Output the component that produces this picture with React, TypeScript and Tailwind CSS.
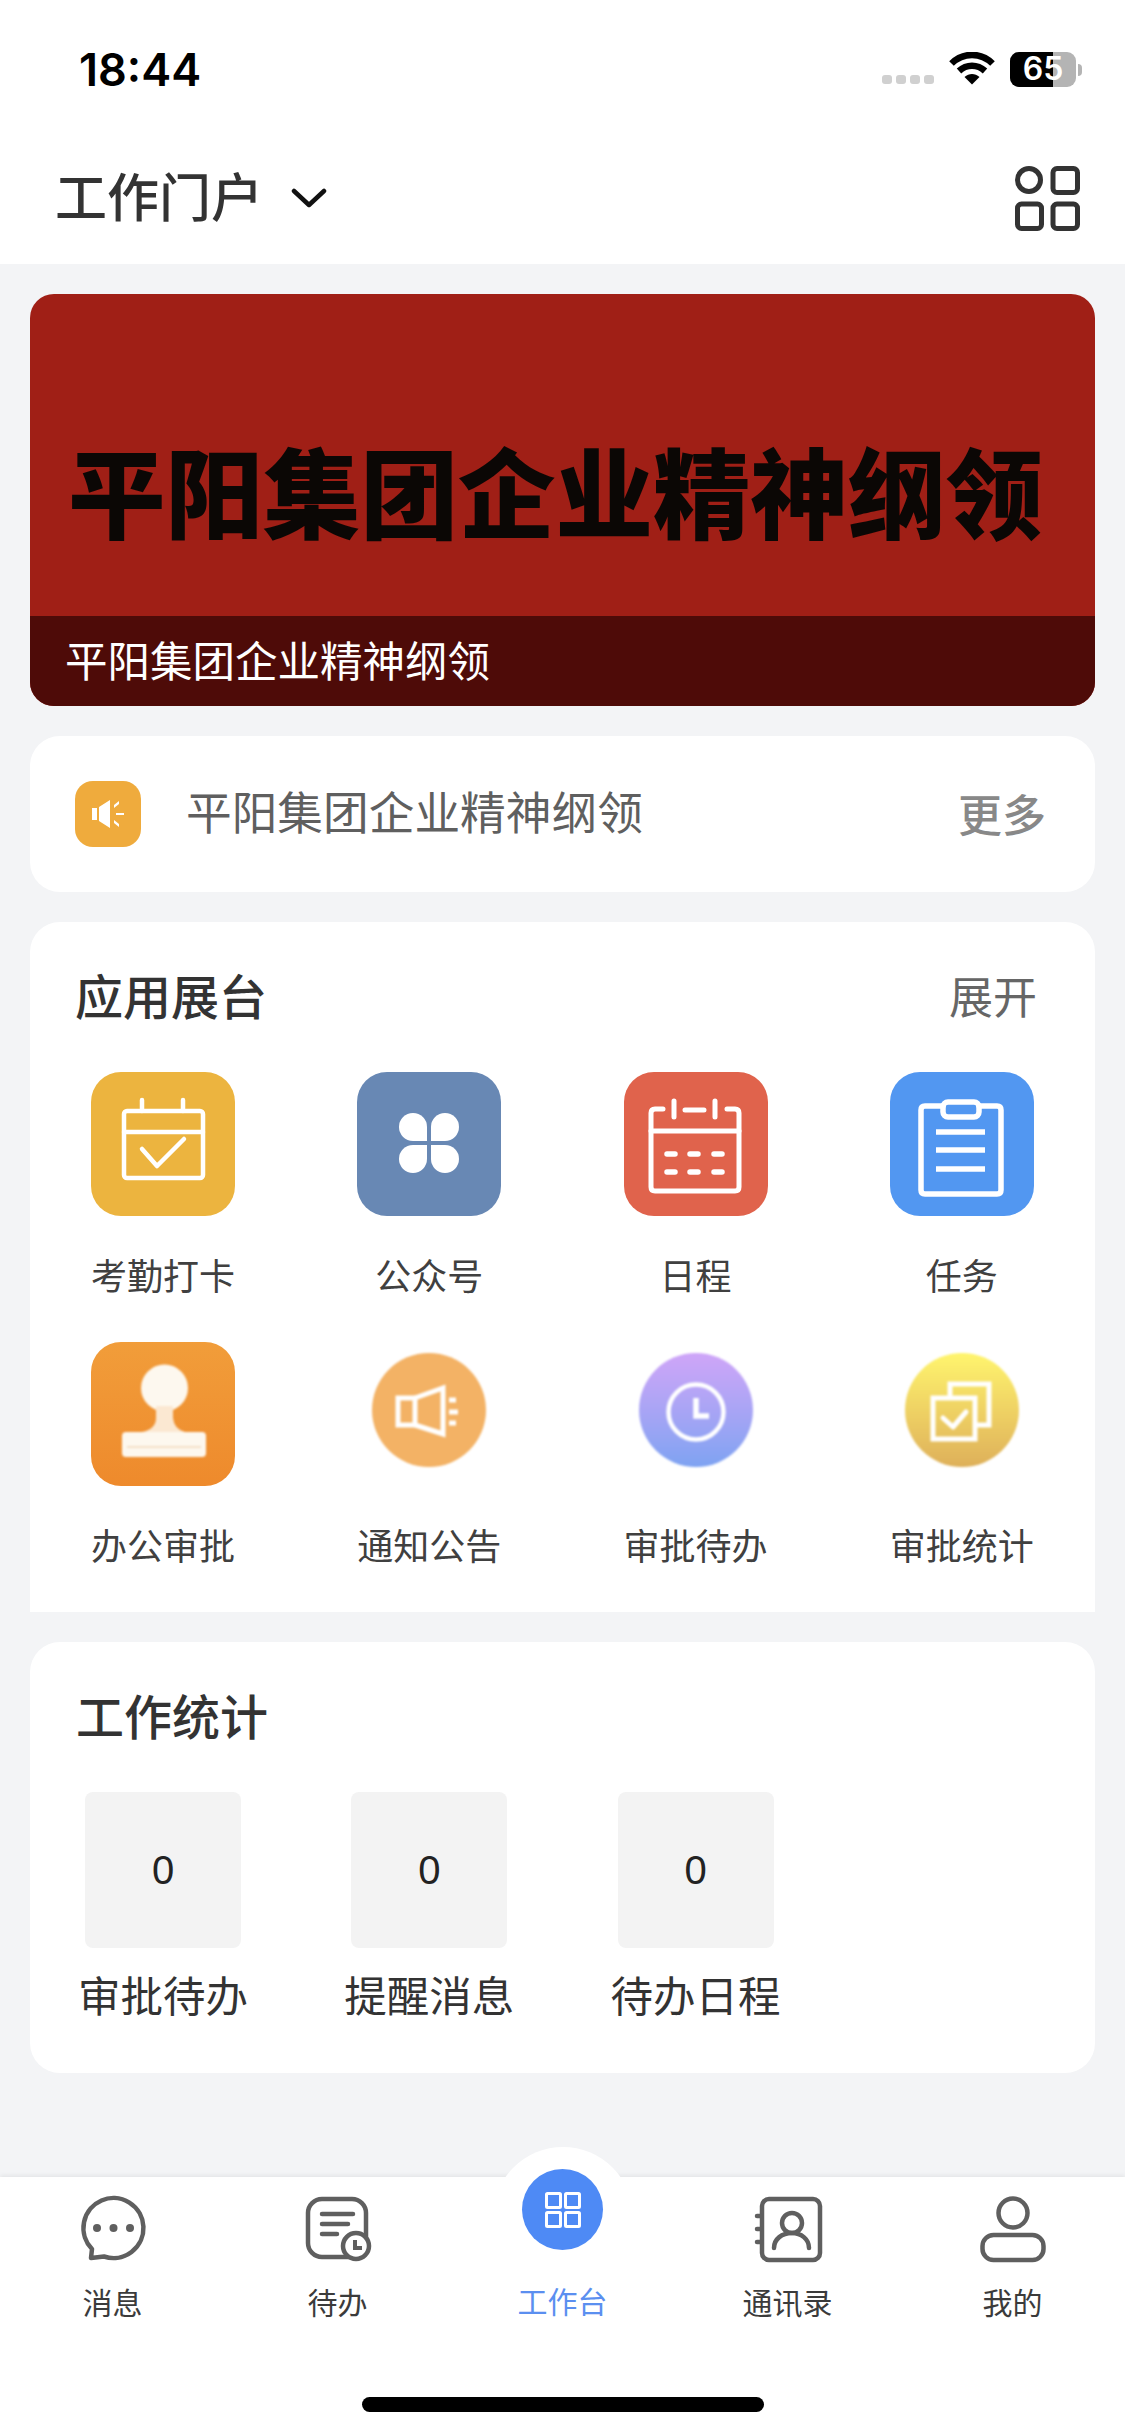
const cjk = "font-['Noto_Sans_CJK_SC','Noto_Sans',sans-serif]";

function AttendanceIcon() {
  return (
    <svg viewBox="0 0 144 144" className="w-full h-full blur-[0.5px]" fill="none" stroke="white" strokeWidth="4.5" strokeLinecap="round" strokeLinejoin="round">
      <rect x="33" y="39" width="79" height="67" rx="3" />
      <path d="M33 60H112M51 28V39M92 28V39M51 77L66 94L93 67" />
    </svg>
  );
}

function CloverIcon() {
  const petal = "M70 69H56A14 14 0 1 1 70 55Z";
  return (
    <svg viewBox="0 0 144 144" className="w-full h-full blur-[0.5px]" fill="white">
      <path d={petal} />
      <path d={petal} transform="translate(144 0) scale(-1 1)" />
      <path d={petal} transform="translate(0 142) scale(1 -1)" />
      <path d={petal} transform="translate(144 142) scale(-1 -1)" />
    </svg>
  );
}

function ScheduleIcon() {
  return (
    <svg viewBox="0 0 144 144" className="w-full h-full blur-[0.5px]" fill="none" stroke="white" strokeWidth="5" strokeLinecap="round" strokeLinejoin="round">
      <path d="M39 37H31Q27 37 27 41V115Q27 119 31 119H111Q115 119 115 115V41Q115 37 111 37H103" />
      <path d="M27 59H115M61 38H80M50 29V45M91 29V45" />
      <path d="M43 82H51M66 82H74M90 82H98M43 100H51M66 100H74M90 100H98" strokeWidth="5.5" />
    </svg>
  );
}

function TaskIcon() {
  return (
    <svg viewBox="0 0 144 144" className="w-full h-full blur-[0.5px]" fill="none" stroke="white" strokeWidth="5.5" strokeLinecap="round" strokeLinejoin="round">
      <path d="M53 34H35Q31 34 31 38V118Q31 122 35 122H107Q111 122 111 118V38Q111 34 107 34H89" />
      <rect x="53" y="30" width="36" height="15" rx="5" />
      <path d="M46 60H95M46 78H95M46 97H95" strokeLinecap="butt" />
    </svg>
  );
}

function StampIcon() {
  return (
    <svg viewBox="0 0 144 144" className="w-full h-full blur-[1px]" fill="#fdf8ef">
      <circle cx="73.5" cy="46" r="23.5" />
      <path d="M65 64H82V76Q83 87 94 90H51Q65 87 65 76Z" fill="#fbe8d2" />
      <rect x="31" y="90" width="84" height="25" rx="4" />
      <path d="M36 105H110" stroke="#f0d9bb" strokeWidth="1.5" />
    </svg>
  );
}

function HornIcon() {
  return (
    <svg viewBox="15 11 114 114" className="w-full h-full" fill="none" stroke="white" strokeWidth="5">
      <path d="M41 56H58V83H41Z" />
      <path d="M58 56L86 46V92L58 83" />
      <path d="M92 58H99M92 70H101M92 81H99" />
    </svg>
  );
}

function ClockIcon() {
  return (
    <svg viewBox="15 11 114 114" className="w-full h-full" fill="none" stroke="white">
      <circle cx="72" cy="70" r="27.5" strokeWidth="4.5" />
      <path d="M72 56V74H85" strokeWidth="5.5" />
    </svg>
  );
}

function CopyCheckIcon() {
  return (
    <svg viewBox="15 11 114 114" className="w-full h-full" fill="none" stroke="white" strokeWidth="5">
      <path d="M60 56V42H99V83H86" />
      <rect x="43" y="56" width="42" height="41" />
      <path d="M53 76L63 85L76 70" strokeLinecap="round" strokeLinejoin="round" />
    </svg>
  );
}

const apps = [
  { name: "考勤打卡", box: "rounded-[30px] bg-[#ecb43f]", icon: <AttendanceIcon /> },
  { name: "公众号", box: "rounded-[30px] bg-[#6888b4]", icon: <CloverIcon /> },
  { name: "日程", box: "rounded-[30px] bg-[#e0634c]", icon: <ScheduleIcon /> },
  { name: "任务", box: "rounded-[30px] bg-[#5297f1]", icon: <TaskIcon /> },
  { name: "办公审批", box: "rounded-[30px] bg-linear-to-b from-[#f19d3a] to-[#ee8a2c]", icon: <StampIcon /> },
  { name: "通知公告", round: "bg-[#f3b265]", icon: <HornIcon /> },
  { name: "审批待办", round: "bg-linear-to-b from-[#cfa5f8] to-[#7ea3f2]", icon: <ClockIcon /> },
  { name: "审批统计", round: "bg-linear-to-b from-[#fff56e] to-[#deb05a]", icon: <CopyCheckIcon /> },
];

const stats = ["审批待办", "提醒消息", "待办日程"];

function ChatIcon() {
  return (
    <svg viewBox="0 0 72 72" className="w-[72px] h-[72px]" fill="none" stroke="#5f5f5f" strokeWidth="4.5" strokeLinejoin="round">
      <path d="M14 65L15 56A30 30 0 1 1 27 63.5Z" />
      <circle cx="20" cy="35" r="4" fill="#5f5f5f" stroke="none" />
      <circle cx="36.5" cy="35" r="4" fill="#5f5f5f" stroke="none" />
      <circle cx="53" cy="35" r="4" fill="#5f5f5f" stroke="none" />
    </svg>
  );
}

function TodoIcon() {
  return (
    <svg viewBox="0 0 72 72" className="w-[72px] h-[72px]" fill="none" stroke="#5f5f5f" strokeWidth="4.5" strokeLinecap="round">
      <rect x="6" y="6" width="58" height="58" rx="14" />
      <path d="M20 21H51M20 31H46M20 41H35" />
      <circle cx="54" cy="53" r="13" fill="white" />
      <path d="M53 47V55H60" strokeWidth="4" strokeLinecap="butt" />
    </svg>
  );
}

function ContactsIcon() {
  return (
    <svg viewBox="0 0 72 72" className="w-[72px] h-[72px]" fill="none" stroke="#5f5f5f" strokeWidth="4.5" strokeLinecap="round">
      <rect x="10" y="6" width="58" height="61" rx="7" />
      <path d="M5 23H9M5 36H9M5 49H9" />
      <circle cx="40" cy="30" r="10" />
      <path d="M22 55C22 46 30 40 40 40C49 40 57 46 57 55" />
    </svg>
  );
}

function MineIcon() {
  return (
    <svg viewBox="0 0 72 72" className="w-[72px] h-[72px]" fill="none" stroke="#5f5f5f" strokeWidth="4.5">
      <circle cx="36" cy="20" r="14.5" />
      <rect x="5.5" y="42" width="61" height="25" rx="11" />
    </svg>
  );
}

function NavItem({ label, icon }: { label: string; icon: React.ReactNode }) {
  return (
    <div className="w-[225px] flex flex-col items-center pt-[16px]">
      {icon}
      <span className="mt-[18px] text-[30px] leading-[36px] text-[#3b3b3b]">{label}</span>
    </div>
  );
}

export default function App() {
  return (
    <div className={`relative w-[1125px] min-h-[2436px] flex flex-col bg-[#f3f4f6] overflow-hidden ${cjk}`}>
      {/* Header */}
      <div className="bg-white h-[264px] shrink-0">
        <div className="h-[132px] pt-[6px] pl-[79px] pr-[43px] flex items-center justify-between">
          <span className="font-['Inter',sans-serif] font-semibold text-[45px] leading-none text-black">18:44</span>
          <div className="flex items-start">
            <div className="flex gap-[4px] mt-[23px] mr-[15px]">
              <span className="w-[10px] h-[9px] rounded-[3px] bg-[#d0d0d0]" />
              <span className="w-[10px] h-[9px] rounded-[3px] bg-[#d0d0d0]" />
              <span className="w-[10px] h-[9px] rounded-[3px] bg-[#d0d0d0]" />
              <span className="w-[10px] h-[9px] rounded-[3px] bg-[#d0d0d0]" />
            </div>
            <svg viewBox="0 0 46 33" className="w-[46px] h-[33px] mr-[15px]" fill="none" stroke="black" strokeWidth="6.5">
              <path d="M2.5 11.5C14 0 32 0 43.5 11.5" />
              <path d="M10 19C17.5 12 28.5 12 36 19" />
              <path d="M15.5 25L23 32.5L30.5 25C26 21 20 21 15.5 25Z" fill="black" stroke="none" />
            </svg>
            <div className="relative w-[66px] h-[35px] rounded-[9px] bg-[#b4b4b4] flex items-center justify-center">
              <span className="absolute left-0 top-0 bottom-0 w-[43px] rounded-l-[9px] bg-black" />
              <span className="relative font-['Inter',sans-serif] font-semibold text-[32px] leading-none text-white">65</span>
            </div>
            <span className="w-[4px] h-[12px] mt-[12px] ml-[2px] rounded-r-full bg-[#b4b4b4]" />
          </div>
        </div>
        <div className="h-[132px] pl-[55px] pr-[45px] flex items-center justify-between">
          <div className="flex items-center">
            <span className="text-[52px] leading-none font-medium text-[#333333] pb-[6px]">工作门户</span>
            <svg viewBox="0 0 36 20" className="ml-[28px] w-[36px] h-[20px]" fill="none" stroke="#111111" strokeWidth="4.5" strokeLinecap="round" strokeLinejoin="round">
              <path d="M3 3L18 17L33 3" />
            </svg>
          </div>
          <svg viewBox="0 0 65 65" className="w-[65px] h-[65px]" fill="none" stroke="#333333" strokeWidth="5">
            <circle cx="14" cy="14" r="11.5" />
            <rect x="38" y="2.5" width="24.5" height="24" rx="4" />
            <rect x="2.5" y="38" width="24" height="24.5" rx="4" />
            <rect x="38" y="38" width="24.5" height="24.5" rx="4" />
          </svg>
        </div>
      </div>

      {/* Content */}
      <div className="px-[30px] pt-[30px] flex flex-col gap-[30px]">
        <div className="h-[412px] rounded-[24px] overflow-hidden bg-[#a01f16] flex flex-col">
          <div className="flex-1 flex items-center justify-center pt-[67px] pr-[14px]">
            <span className="text-[97.5px] leading-none font-black text-[#0b0705] whitespace-nowrap">平阳集团企业精神纲领</span>
          </div>
          <div className="h-[90px] bg-[#4e0b08] pl-[35px] pb-[4px] flex items-center">
            <span className="text-[42.5px] leading-none text-white">平阳集团企业精神纲领</span>
          </div>
        </div>

        <div className="h-[156px] rounded-[30px] bg-white pl-[45px] pr-[49px] flex items-center">
          <div className="w-[66px] h-[66px] rounded-[18px] bg-[#efab3d] flex items-center justify-center">
            <svg viewBox="0 0 32 28" className="w-[32px] h-[28px]" fill="white">
              <path d="M0 8H5V20H0ZM7 7L18 0V28L7 21Z" />
              <path d="M22 5L27 1V4L22 8ZM24 13H32V15H24ZM22 20L27 24V27L22 23Z" />
            </svg>
          </div>
          <span className="ml-[45px] pb-[6px] text-[45.7px] leading-none text-[#5f5f5f] whitespace-nowrap">平阳集团企业精神纲领</span>
          <span className="ml-auto pb-[3px] text-[44px] leading-none font-medium text-[#888888]">更多</span>
        </div>

        <div className="h-[690px] rounded-t-[30px] bg-white">
          <div className="h-[150px] pl-[45px] pr-[58px] flex items-center justify-between">
            <span className="pb-[6px] text-[48px] leading-none font-medium text-[#333333]">应用展台</span>
            <span className="pb-[5px] text-[44px] leading-none text-[#666666]">展开</span>
          </div>
          <div className="grid grid-cols-4 gap-y-[48px]">
            {apps.map((app) => (
              <div key={app.name} className="flex flex-col items-center">
                {app.box ? (
                  <div className={`w-[144px] h-[144px] overflow-hidden ${app.box}`}>{app.icon}</div>
                ) : (
                  <div className="w-[144px] h-[144px] pt-[11px] flex justify-center">
                    <div className={`w-[114px] h-[114px] rounded-full blur-[1px] ${app.round}`}>{app.icon}</div>
                  </div>
                )}
                <span className="mt-[38px] text-[36px] leading-[40px] text-[#404040]">{app.name}</span>
              </div>
            ))}
          </div>
        </div>

        <div className="h-[431px] rounded-[30px] bg-white">
          <div className="h-[150px] pl-[46px] pb-[6px] flex items-center">
            <span className="text-[48px] leading-none font-medium text-[#333333]">工作统计</span>
          </div>
          <div className="grid grid-cols-4">
            {stats.map((label) => (
              <div key={label} className="flex flex-col items-center">
                <div className="w-[156px] h-[156px] rounded-[8px] bg-[#f3f3f3] flex items-center justify-center">
                  <span className="font-['Liberation_Sans',sans-serif] text-[40px] leading-none text-[#222222]">0</span>
                </div>
                <span className="mt-[21px] text-[42.5px] leading-[50px] text-[#333333]">{label}</span>
              </div>
            ))}
          </div>
        </div>
      </div>

      {/* Bottom navigation */}
      <div className="relative mt-auto h-[259px] bg-white shadow-[0_-2px_4px_rgba(0,0,0,0.06)]">
        <div className="absolute left-1/2 -translate-x-1/2 -top-[30px] w-[140px] h-[140px] rounded-full bg-white" />
        <div className="relative flex">
          <NavItem label="消息" icon={<ChatIcon />} />
          <NavItem label="待办" icon={<TodoIcon />} />
          <div className="w-[225px] flex flex-col items-center -mt-[8px]">
            <div className="w-[81px] h-[81px] rounded-full bg-[#4e8af5] flex items-center justify-center">
              <svg viewBox="0 0 36 36" className="w-[36px] h-[36px]" fill="none" stroke="white" strokeWidth="3">
                <rect x="1.5" y="1.5" width="14" height="14" rx="1" />
                <rect x="20.5" y="1.5" width="14" height="14" rx="1" />
                <rect x="1.5" y="20.5" width="14" height="14" rx="1" />
                <rect x="20.5" y="20.5" width="14" height="14" rx="1" />
              </svg>
            </div>
            <span className="mt-[32px] text-[30px] leading-[36px] text-[#5b8ff0]">工作台</span>
          </div>
          <NavItem label="通讯录" icon={<ContactsIcon />} />
          <NavItem label="我的" icon={<MineIcon />} />
        </div>
        <div className="absolute left-[362px] top-[220px] w-[402px] h-[15px] rounded-full bg-black" />
      </div>
    </div>
  );
}
